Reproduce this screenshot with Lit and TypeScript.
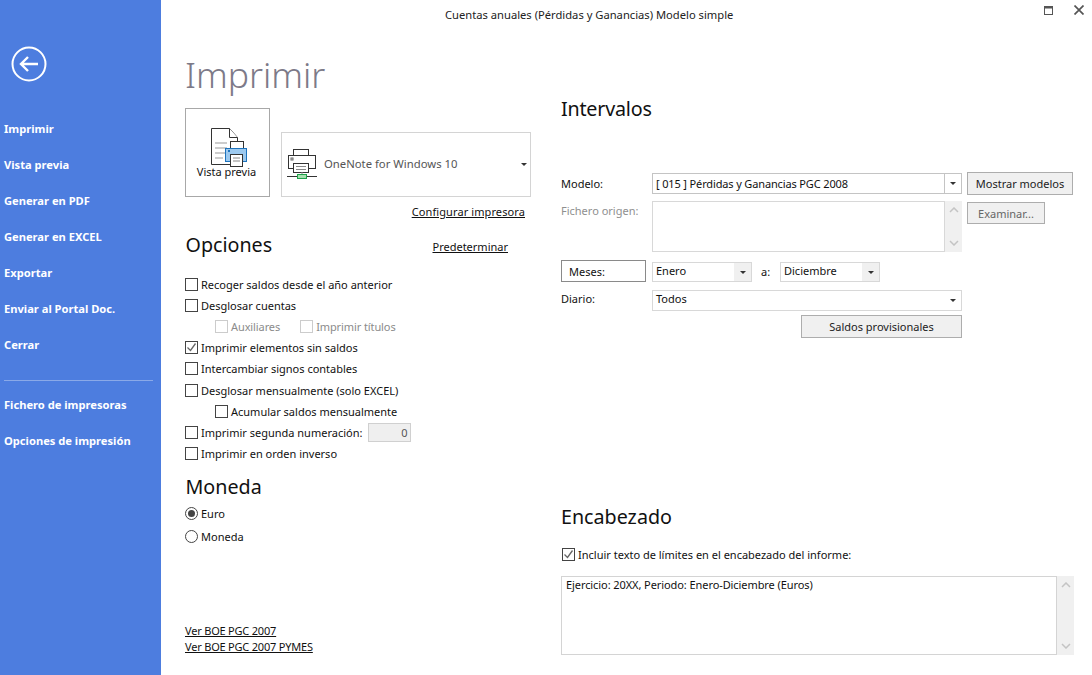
import { LitElement, html, css, svg } from "lit";
import { customElement } from "lit/decorators.js";

const arrow = svg`<svg width="6" height="3" viewBox="0 0 6 3"><path d="M0 0h6L3 3z" fill="#333"/></svg>`;
const chevUp = html`<svg width="10" height="6" viewBox="0 0 10 6"><path d="M1 5l4-4 4 4" fill="none" stroke="#c4c4c4" stroke-width="1.500"/></svg>`;
const chevDown = html`<svg width="10" height="6" viewBox="0 0 10 6"><path d="M1 1l4 4 4-4" fill="none" stroke="#c4c4c4" stroke-width="1.500"/></svg>`;

@customElement("app-root")
export class AppRoot extends LitElement {
  static styles = css`
    :host { display: flex; width: 1092px; height: 675px; overflow: hidden; background: #fff; color: #111;
      font-family: "Noto Sans", "Open Sans", sans-serif; font-size: 11px; }
    * { box-sizing: border-box; }
    .side { width: 161px; flex: none; background: #4d7ddf; color: #fff; font-weight: 700; font-size: 11.150px; padding-top: 46px; }
    .back { display: block; margin-left: 11px; margin-bottom: 29px; }
    .nav { height: 36px; line-height: 36px; padding-left: 4px; white-space: nowrap; }
    .rule { height: 1px; background: #8aa9e8; margin: 17px 8px 6px 4px; }
    .main { flex: 1; display: flex; flex-direction: column; min-width: 0; }
    .titlebar { height: 28px; flex: none; display: flex; align-items: center; padding-left: 284px; position: relative; font-size: 11.200px; color: #222; }
    .wincontrols { position: absolute; right: 8px; top: 5px; display: flex; gap: 21px; align-items: center; }
    .cols { flex: 1; display: flex; padding-left: 24px; }
    .left { width: 346px; flex: none; }
    .right { width: 513px; margin-left: 30px; }
    h1 { margin: 23px 0 0; height: 57px; font-size: 35.500px; line-height: 46px; font-weight: 300; color: #7d7a88; }
    h2 { margin: 0; font-weight: 400; font-size: 19.700px; line-height: 28px; color: #111; padding-left: .5px; }
    .printers { display: flex; align-items: flex-end; gap: 11px; height: 89px; }
    .preview { width: 85px; height: 89px; border: 1px solid #a8a8a8; display: flex; flex-direction: column; align-items: center; padding-top: 19px; }
    .preview svg { margin-left: 3px; }
    .preview span { margin-top: -4px; margin-left: -2px; line-height: 16px; }
    .picker { width: 250px; height: 65px; border: 1px solid #d4d4d4; display: flex; align-items: center; padding: 0 3px 0 4px; color: #555; font-size: 11.300px; }
    .picker .name { flex: 1; margin-left: 6px; margin-top: -3px; }
    a { color: #111; text-decoration: underline; }
    .cfg { display: flex; justify-content: flex-end; padding-right: 6px; height: 29px; align-items: center; letter-spacing: .1px; }
    .opt-head { display: flex; justify-content: space-between; align-items: center; height: 28px; margin-top: 5px; padding-right: 23px; }
    .opt-head a { margin-top: 3px; }
    .options { margin-top: 15px; }
    .row { display: flex; align-items: center; height: 21.100px; white-space: nowrap; }
    .row.in { padding-left: 30px; }
    .box { width: 13px; height: 13px; border: 1px solid #444; background: #fff; margin: 0 3px 0 0; flex: none; display: flex; }
    .box.off { border-color: #ccc; }
    .off-t { color: #8b8b8b; letter-spacing: -.1px; }
    .gap { margin-left: 20px; }
    .num { width: 43px; height: 19px; margin-left: 6px; background: #efefef; border: 1px solid #d0d0d0; text-align: right; line-height: 18px; padding-right: 3px; color: #555; }
    .mon { margin-top: 9px; }
    .radio { display: flex; align-items: center; height: 23px; }
    .radio:first-of-type { margin-top: 1px; }
    .dot { width: 13px; height: 13px; border: 1px solid #444; border-radius: 50%; margin: 0 3px 0 0; display: flex; align-items: center; justify-content: center; }
    .dot i { width: 7px; height: 7px; border-radius: 50%; background: #444; display: block; }
    .links { margin-top: 75px; display: flex; flex-direction: column; line-height: 16px; letter-spacing: -.2px; }
    .rhead { margin-top: 67px; height: 56px; }
    .rhead h2 { padding-left: 0; letter-spacing: -.2px; }
    .lbl { display: flex; align-items: center; }
    .combo { height: 21px; border: 1px solid #c4c4c4; display: flex; align-items: center; padding-left: 3px; }
    .combo .v { flex: 1; }
    .combo .arr { width: 17px; align-self: stretch; border-left: 1px solid #c4c4c4; display: flex; align-items: center; justify-content: center; }
    .combo.soft { border-color: #d8d8d8; height: 20px; margin-top: 2px; }
    .combo.soft .v { margin-top: -3px; }
    .combo.soft .arr { background: #f0f0f0; border-left: none; }
    .btn { border: 1px solid #adadad; background: #f0f0f0; display: flex; align-items: center; justify-content: center; color: #222; }
    .r1 { display: flex; align-items: center; height: 25px; margin-top: 20px; }
    .r1 .lbl { width: 91px; }
    .r1 .combo { width: 310px; letter-spacing: -.14px; }
    .r1 .btn { width: 106px; height: 23px; margin-left: 5px; }
    .r2 { display: flex; margin-top: 5px; height: 51px; }
    .r2 .lbl { width: 91px; height: 19px; color: #8f8f8f; }
    .ta { flex: 1; border: 1px solid #d8d8d8; }
    .sb { width: 17px; background: #f0f0f0; display: flex; flex-direction: column; align-items: center; justify-content: space-between; padding: 6px 0; flex: none; }
    .r2 .wrap { width: 310px; display: flex; }
    .r2 .btn { width: 78px; height: 22px; margin-left: 5px; margin-top: 1px; color: #666; }
    .r3 { display: flex; align-items: center; margin-top: 8px; height: 22px; }
    .meses { width: 85px; height: 22px; border: 1px solid #8a8a8a; padding-left: 7px; display: flex; align-items: center; margin-right: 6px; }
    .r3 .combo { width: 100px; }
    .r3 .a { width: 28px; padding-left: 9px; }
    .r4 { display: flex; align-items: center; margin-top: 6px; height: 22px; }
    .r4 .lbl { width: 91px; margin-top: -2px; }
    .r4 .combo { width: 310px; height: 21px; }
    .r4 .combo.soft .arr { background: #fff; }
    .r5 { margin-top: 5px; margin-left: 240px; width: 161px; height: 23px; }
    .enc { margin-top: 165px; }
    .enc h2 { padding-left: 0; }
    .inc { display: flex; align-items: center; height: 20px; margin-top: 13px; padding-left: 1px; }
    .ta2 { display: flex; height: 79px; margin-top: 12px; width: 513px; }
    .ta2 .t { flex: 1; border: 1px solid #d4d4d4; padding: 0 4px; line-height: 15px; letter-spacing: -.08px; }
  `;

  private box(on = false, off = false) {
    return html`<span class="box ${off ? "off" : ""}">${on
      ? html`<svg width="11" height="11" viewBox="0 0 11 11"><path d="M1.500 5.500l3 3 5-7" fill="none" stroke="#666" stroke-width="1.300"/></svg>`
      : ""}</span>`;
  }

  render() {
    const items = ["Imprimir", "Vista previa", "Generar en PDF", "Generar en EXCEL", "Exportar", "Enviar al Portal Doc.", "Cerrar"];
    return html`
      <aside class="side">
        <svg class="back" width="36" height="36" viewBox="0 0 36 36">
          <circle cx="18" cy="18" r="16.500" fill="none" stroke="#fff" stroke-width="2"/>
          <path d="M27 18H10M17 11l-7 7 7 7" fill="none" stroke="#fff" stroke-width="2.400"/>
        </svg>
        ${items.map((i) => html`<div class="nav">${i}</div>`)}
        <div class="rule"></div>
        <div class="nav">Fichero de impresoras</div>
        <div class="nav">Opciones de impresión</div>
      </aside>
      <div class="main">
        <div class="titlebar">
          <span>Cuentas anuales (Pérdidas y Ganancias) Modelo simple</span>
          <div class="wincontrols">
            <svg width="9" height="9" viewBox="0 0 9 9"><rect x=".5" y=".5" width="8" height="8" fill="none" stroke="#555"/><rect y="0" width="9" height="2.500" fill="#555"/></svg>
            <svg width="10" height="10" viewBox="0 0 10 10"><path d="M.5.5l9 9M9.500.5l-9 9" stroke="#555" stroke-width="1.700"/></svg>
          </div>
        </div>
        <div class="cols">
          <section class="left">
            <h1>Imprimir</h1>
            <div class="printers">
              <div class="preview">
                <svg width="37" height="40" viewBox="0 0 37 40">
                  <path d="M.5.500h18l8 9v27H.5z" fill="#fff" stroke="#333"/>
                  <path d="M18.500.5v9h8" fill="#fff" stroke="#333"/>
                  <path d="M4 15h12M4 20h12M4 25h12M4 30h8" stroke="#999"/>
                  <rect x="19.500" y="13.500" width="13" height="8" fill="#fff" stroke="#333"/>
                  <rect x="14.500" y="20.500" width="21" height="13" fill="#9cc9ef" stroke="#1d73bd"/>
                  <rect x="17" y="22" width="2" height="2" fill="#1d73bd"/>
                  <rect x="19.500" y="26.500" width="12" height="12" fill="#fff" stroke="#333"/>
                  <path d="M22 30h7M22 33h7" stroke="#888"/>
                </svg>
                <span>Vista previa</span>
              </div>
              <div class="picker">
                <svg width="32" height="32" viewBox="0 0 32 32">
                  <rect x="7.500" y=".5" width="15" height="6" fill="#fff" stroke="#333"/>
                  <rect x="2.500" y="6.500" width="27" height="13" fill="#fff" stroke="#333"/>
                  <rect x="5" y="9" width="2" height="2" fill="none" stroke="#666"/>
                  <rect x="7.500" y="14.500" width="15" height="9" fill="#fff" stroke="#333"/>
                  <path d="M10 17.500h10M10 20.500h10" stroke="#888"/>
                  <path d="M16 23v3" stroke="#888"/>
                  <path d="M1 27.500h30" stroke="#333"/>
                  <rect x="11.500" y="25.500" width="9" height="4" fill="#a8e0b0" stroke="#1fa34a"/>
                </svg>
                <span class="name">OneNote for Windows 10</span>
                ${arrow}
              </div>
            </div>
            <div class="cfg"><a href="#">Configurar impresora</a></div>
            <div class="opt-head"><h2>Opciones</h2><a href="#">Predeterminar</a></div>
            <div class="options">
              <div class="row">${this.box()}Recoger saldos desde el año anterior</div>
              <div class="row">${this.box()}Desglosar cuentas</div>
              <div class="row in">${this.box(false, true)}<span class="off-t">Auxiliares</span><span class="gap"></span>${this.box(false, true)}<span class="off-t">Imprimir títulos</span></div>
              <div class="row">${this.box(true)}Imprimir elementos sin saldos</div>
              <div class="row">${this.box()}Intercambiar signos contables</div>
              <div class="row">${this.box()}Desglosar mensualmente (solo EXCEL)</div>
              <div class="row in">${this.box()}Acumular saldos mensualmente</div>
              <div class="row">${this.box()}Imprimir segunda numeración:<span class="num">0</span></div>
              <div class="row">${this.box()}Imprimir en orden inverso</div>
            </div>
            <div class="mon">
              <h2>Moneda</h2>
              <div class="radio"><span class="dot"><i></i></span>Euro</div>
              <div class="radio"><span class="dot"></span>Moneda</div>
            </div>
            <div class="links"><a href="#">Ver BOE PGC 2007</a><a href="#">Ver BOE PGC 2007 PYMES</a></div>
          </section>
          <section class="right">
            <div class="rhead"><h2>Intervalos</h2></div>
            <div class="r1">
              <span class="lbl">Modelo:</span>
              <div class="combo"><span class="v">[ 015 ] Pérdidas y Ganancias PGC 2008</span><span class="arr">${arrow}</span></div>
              <div class="btn">Mostrar modelos</div>
            </div>
            <div class="r2">
              <span class="lbl">Fichero origen:</span>
              <div class="wrap"><div class="ta"></div><div class="sb">${chevUp}${chevDown}</div></div>
              <div class="btn">Examinar...</div>
            </div>
            <div class="r3">
              <div class="meses">Meses:</div>
              <div class="combo soft"><span class="v">Enero</span><span class="arr">${arrow}</span></div>
              <span class="a">a:</span>
              <div class="combo soft"><span class="v">Diciembre</span><span class="arr">${arrow}</span></div>
            </div>
            <div class="r4">
              <span class="lbl">Diario:</span>
              <div class="combo soft"><span class="v">Todos</span><span class="arr">${arrow}</span></div>
            </div>
            <div class="btn r5">Saldos provisionales</div>
            <div class="enc">
              <h2>Encabezado</h2>
              <div class="inc">${this.box(true)}Incluir texto de límites en el encabezado del informe:</div>
              <div class="ta2"><div class="t">Ejercicio: 20XX, Periodo: Enero-Diciembre (Euros)</div><div class="sb">${chevUp}${chevDown}</div></div>
            </div>
          </section>
        </div>
      </div>
    `;
  }
}
